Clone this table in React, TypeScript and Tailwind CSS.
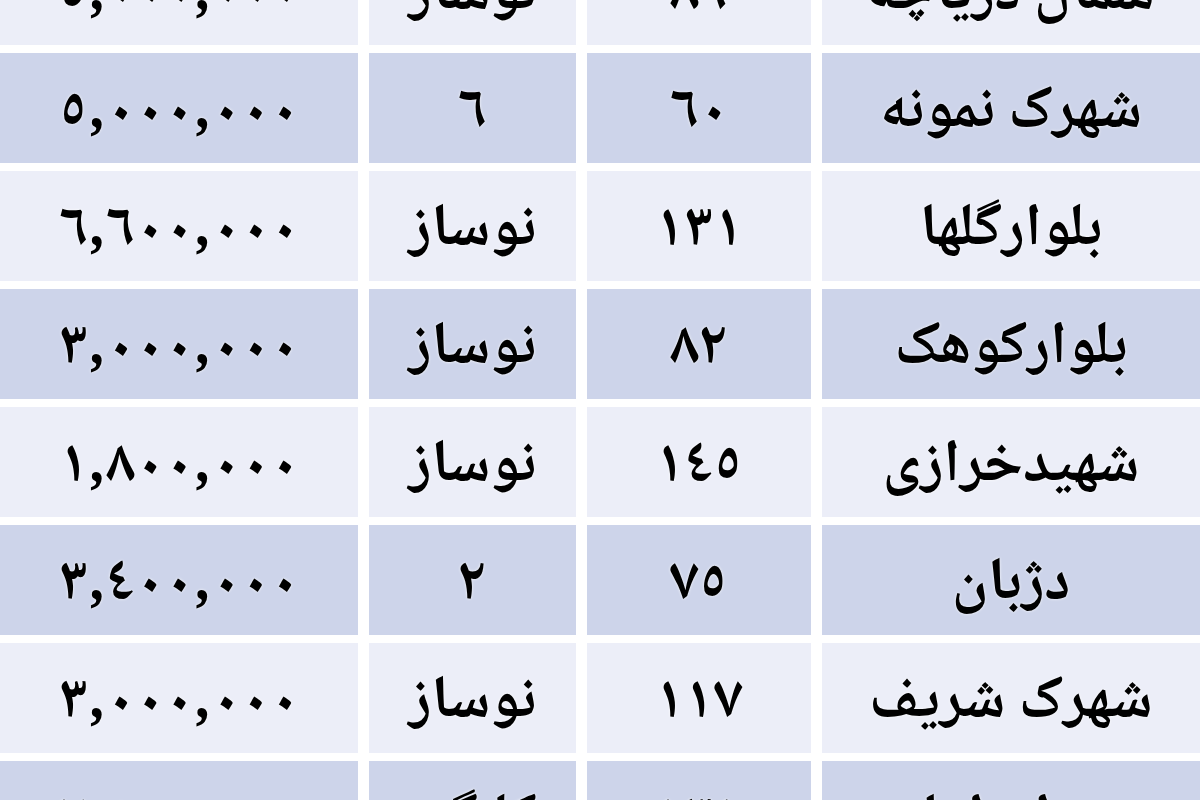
import React from "react";

type Row = { place: string; area: string; age: string; price: string };

const rows: Row[] = [
  { place: "شمال دریاچه", area: "٨٩", age: "نوساز", price: "٥,٠٠٠,٠٠٠" },
  { place: "شهرک نمونه", area: "٦٠", age: "٦", price: "٥,٠٠٠,٠٠٠" },
  { place: "بلوارگلها", area: "١٣١", age: "نوساز", price: "٦,٦٠٠,٠٠٠" },
  { place: "بلوارکوهک", area: "٨٢", age: "نوساز", price: "٣,٠٠٠,٠٠٠" },
  { place: "شهیدخرازی", area: "١٤٥", age: "نوساز", price: "١,٨٠٠,٠٠٠" },
  { place: "دژبان", area: "٧٥", age: "٢", price: "٣,٤٠٠,٠٠٠" },
  { place: "شهرک شریف", area: "١١٧", age: "نوساز", price: "٣,٠٠٠,٠٠٠" },
  { place: "میدان امام", area: "١٣١", age: "کلنگی", price: "٧,٥٠٠,٠٠٠" },
];

export default function App() {
  return (
    <div className="h-[800px] w-[1200px] overflow-hidden bg-white">
      <div
        dir="rtl"
        className="-mt-[65px] grid grid-cols-[378px_224px_207px_358px] gap-x-[11px] gap-y-2 font-['Noto_Naskh_Arabic','DejaVu_Sans',sans-serif] text-[60px] leading-none font-bold text-black [text-shadow:0_0_3px_#fff]"
      >
        {rows.map((r, i) => {
          const bg = i % 2 === 0 ? "bg-[#eceef8]" : "bg-[#cdd4ea]";
          return (
            <React.Fragment key={i}>
              <div className={`flex h-[110px] items-center justify-center pt-3 ${bg}`}>
                {r.place}
              </div>
              <div className={`flex h-[110px] items-center justify-center pt-3 ${bg}`}>
                {r.area}
              </div>
              <div className={`flex h-[110px] items-center justify-center pt-3 ${bg}`}>
                {r.age}
              </div>
              <div className={`flex h-[110px] items-center justify-center pt-3 ${bg}`}>
                <span dir="ltr">{r.price}</span>
              </div>
            </React.Fragment>
          );
        })}
      </div>
    </div>
  );
}
